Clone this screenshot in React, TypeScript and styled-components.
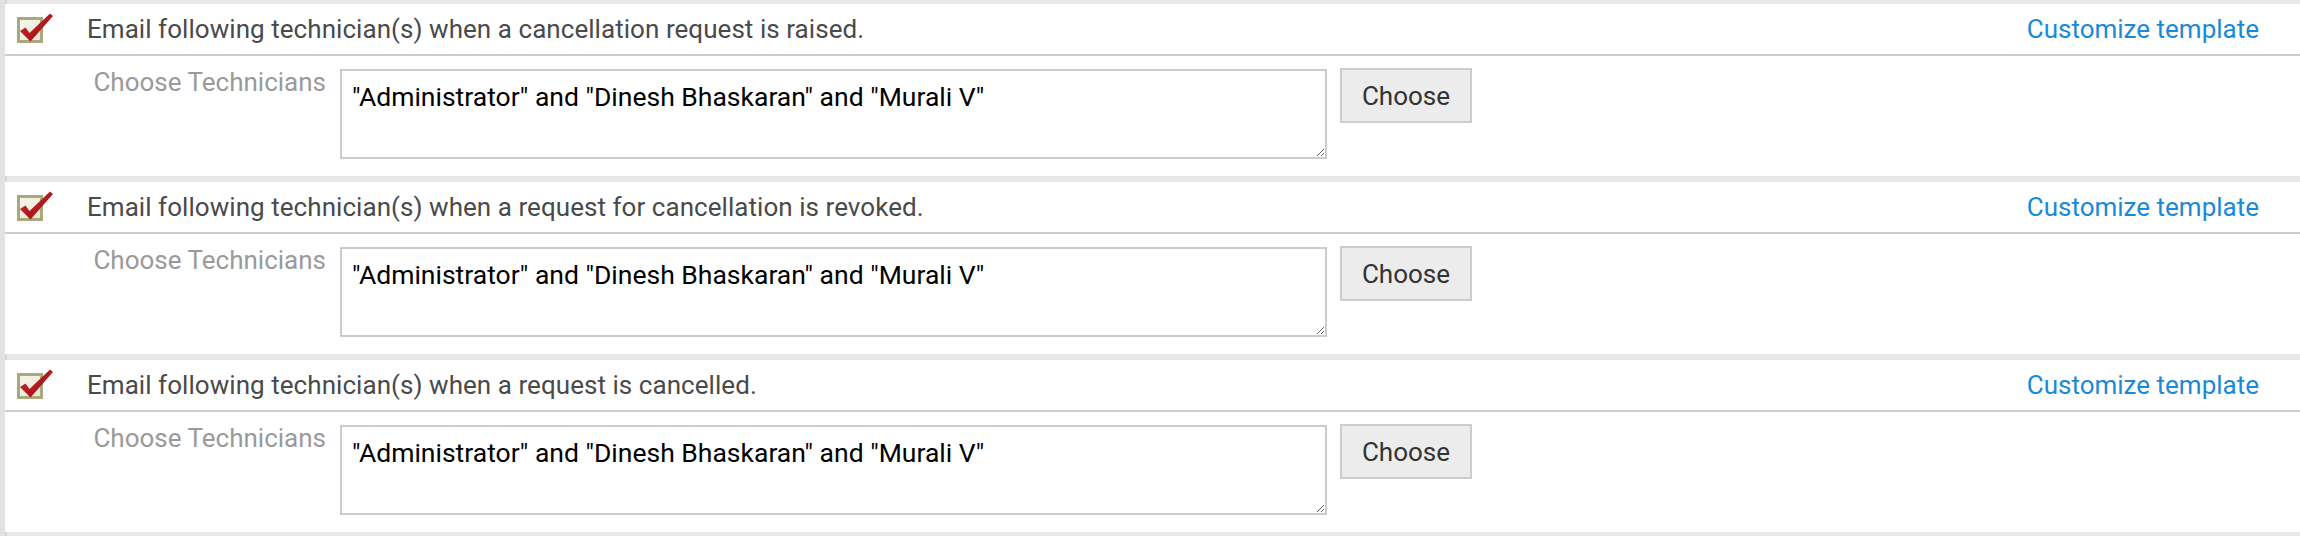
import React from "react";
import styled, { createGlobalStyle } from "styled-components";

const GlobalStyle = createGlobalStyle`
  html, body {
    margin: 0;
    padding: 0;
    background: #e8e8e8;
  }
  body {
    font-family: Roboto, "Liberation Sans", Arial, sans-serif;
  }
`;

const Page = styled.div`
  display: flex;
  flex-direction: column;
  gap: 6px;
  padding: 4px 0 4px 0;
  border-left: 5px solid #e2e2e2;
  box-shadow: inset 2px 0 0 #d6d6d6;
  background: #e8e8e8;
`;

const Block = styled.section`
  display: flex;
  flex-direction: column;
  background: #fff;
  height: 172px;
`;

const Header = styled.div`
  display: flex;
  align-items: center;
  height: 50px;
  padding: 0 41px 0 12px;
  border-bottom: 2px solid #cccccc;
  font-size: 26px;
`;

const Title = styled.span`
  flex: 1;
  margin-left: 32px;
  color: #4a4a4a;
  letter-spacing: 0.05px;
`;

const Link = styled.a`
  color: #1a8ad6;
  text-decoration: none;
  cursor: pointer;
`;

const Body = styled.div`
  display: grid;
  grid-template-columns: 321px 987px 132px;
  column-gap: 14px;
  align-items: start;
  padding-top: 13px;
  font-size: 26px;
`;

const Label = styled.label`
  text-align: right;
  color: #9a9a9a;
  margin-top: -2px;
`;

const Area = styled.textarea`
  box-sizing: border-box;
  height: 90px;
  margin: 0;
  padding: 11px 10px 8px;
  border: 2px solid #cccccc;
  font-family: Roboto, "Liberation Sans", Arial, sans-serif;
  font-size: 26.5px;
  line-height: 1.15;
  color: #000;
  outline: none;
`;

const ChooseButton = styled.button`
  box-sizing: border-box;
  width: 132px;
  height: 55px;
  margin: -1px 0 0 -1px;
  background: #ececec;
  border: 2px solid #cccccc;
  color: #333;
  font-family: Roboto, "Liberation Sans", Arial, sans-serif;
  font-size: 26px;
  padding: 0;
  cursor: pointer;
`;

function CheckIcon() {
  return (
    <svg width="38" height="34" viewBox="0 0 38 34">
      <defs>
        <linearGradient id="boxFill" x1="0" y1="0" x2="1" y2="1">
          <stop offset="0" stopColor="#f6f6ee" />
          <stop offset="1" stopColor="#e6e6d6" />
        </linearGradient>
        <linearGradient id="tick" x1="0" y1="0" x2="1" y2="1">
          <stop offset="0" stopColor="#d8262b" />
          <stop offset="1" stopColor="#8e1014" />
        </linearGradient>
      </defs>
      <rect x="1.5" y="6.5" width="23" height="23" fill="url(#boxFill)" stroke="#a9a97c" strokeWidth="3" />
      <path d="M3 19 L8.5 15.5 L12.5 21 L33 1.5 L36 4 L13.5 29.5 Z" fill="url(#tick)" />
    </svg>
  );
}

const rows = [
  "Email following technician(s) when a cancellation request is raised.",
  "Email following technician(s) when a request for cancellation is revoked.",
  "Email following technician(s) when a request is cancelled.",
];

const techs = '"Administrator" and "Dinesh Bhaskaran" and "Murali V"';

export default function App() {
  return (
    <>
      <GlobalStyle />
      <Page>
        {rows.map((title) => (
          <Block key={title}>
            <Header>
              <CheckIcon />
              <Title>{title}</Title>
              <Link>Customize template</Link>
            </Header>
            <Body>
              <Label>Choose Technicians</Label>
              <Area defaultValue={techs} />
              <ChooseButton>Choose</ChooseButton>
            </Body>
          </Block>
        ))}
      </Page>
    </>
  );
}
